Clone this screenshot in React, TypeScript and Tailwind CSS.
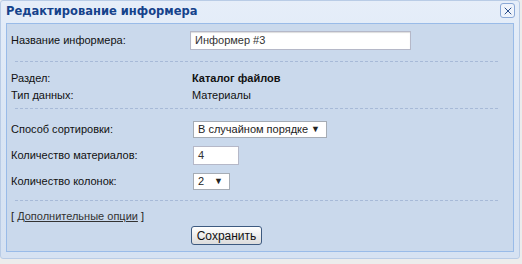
import { X } from "lucide-react";

const font = "font-['Liberation_Sans',Arial,sans-serif]";

function Rule() {
  return <div className="ml-[4px] w-[483px] border-t border-dashed border-[#a7bad8]" />;
}

function Field({ label, children }: { label: string; children: React.ReactNode }) {
  return (
    <div className="flex h-[18px] items-center">
      <span className="w-[182px] shrink-0">{label}</span>
      {children}
    </div>
  );
}

function Select({ value, width }: { value: string; width: string }) {
  return (
    <div
      className={`flex h-[17px] items-center justify-between whitespace-nowrap border border-[#a5acb5] bg-white pl-[4px] pr-[6px] text-[11px] text-[#222] ${width}`}
    >
      <span>{value}</span>
      <span className="text-[9px] leading-none">▼</span>
    </div>
  );
}

export default function App() {
  return (
    <div className={`h-[264px] w-[522px] bg-[#ececec] ${font} text-[11px] text-[#111]`}>
      <div className="h-[259px] w-[520px] rounded-[3px] border border-[#b9cce6] bg-gradient-to-b from-[#e6eef9] via-[#d9e5f4] to-[#d6e2f2]">
        {/* title bar */}
        <div className="flex h-[22px] items-center justify-between pl-[5px] pr-[4px]">
          <span className="font-['DejaVu_Sans',sans-serif] text-[11.5px] font-bold text-[#15428b]">
            Редактирование информера
          </span>
          <button className="mb-[3px] flex h-[15px] w-[15px] items-center justify-center rounded-[3px] border border-[#8aa8d6] bg-[#eef3fb]">
            <X size={12} strokeWidth={2} className="text-[#2a4d8a]" />
          </button>
        </div>

        {/* body */}
        <div className="mx-[5px] h-[229px] border border-[#99bbe8] bg-[#cad9ec] pl-[4px]">
          <div className="flex h-[33px] items-center">
            <span className="w-[179px] shrink-0">Название информера:</span>
            <div className="flex h-[19px] w-[221px] items-center border border-[#b5b8c8] bg-white pl-[4px] text-[#333] shadow-[inset_0_1px_1px_#ddd]">
              Информер #3
            </div>
          </div>
          <div className="mt-[4px]">
            <Rule />
          </div>

          <div className="mt-[8px] flex h-[17px] items-center">
            <span className="w-[181px] shrink-0">Раздел:</span>
            <span className="font-bold">Каталог файлов</span>
          </div>
          <div className="flex h-[16px] items-center">
            <span className="w-[181px] shrink-0">Тип данных:</span>
            <span>Материалы</span>
          </div>
          <div className="mt-[5px]">
            <Rule />
          </div>

          <div className="mt-[11px] flex flex-col gap-[8px]">
            <Field label="Способ сортировки:">
              <Select value="В случайном порядке" width="w-[134px]" />
            </Field>
            <Field label="Количество материалов:">
              <div className="flex h-[19px] w-[46px] items-center border border-[#b5b8c8] bg-white pl-[4px] text-[#333]">
                4
              </div>
            </Field>
            <Field label="Количество колонок:">
              <Select value="2" width="w-[37px]" />
            </Field>
          </div>
          <div className="mt-[10px]">
            <Rule />
          </div>

          <div className="mt-[7px] flex h-[17px] items-center text-[#222]">
            [&nbsp;<a className="text-[#333] underline">Дополнительные опции</a>&nbsp;]
          </div>
          <div className="mt-[1px] pl-[180px]">
            <button className="flex h-[19px] w-[71px] items-center justify-center rounded-[3px] border border-[#3d5a80] bg-gradient-to-b from-[#ffffff] to-[#dcdcdc] text-[12px] text-[#111]">
              Сохранить
            </button>
          </div>
        </div>
      </div>
    </div>
  );
}
